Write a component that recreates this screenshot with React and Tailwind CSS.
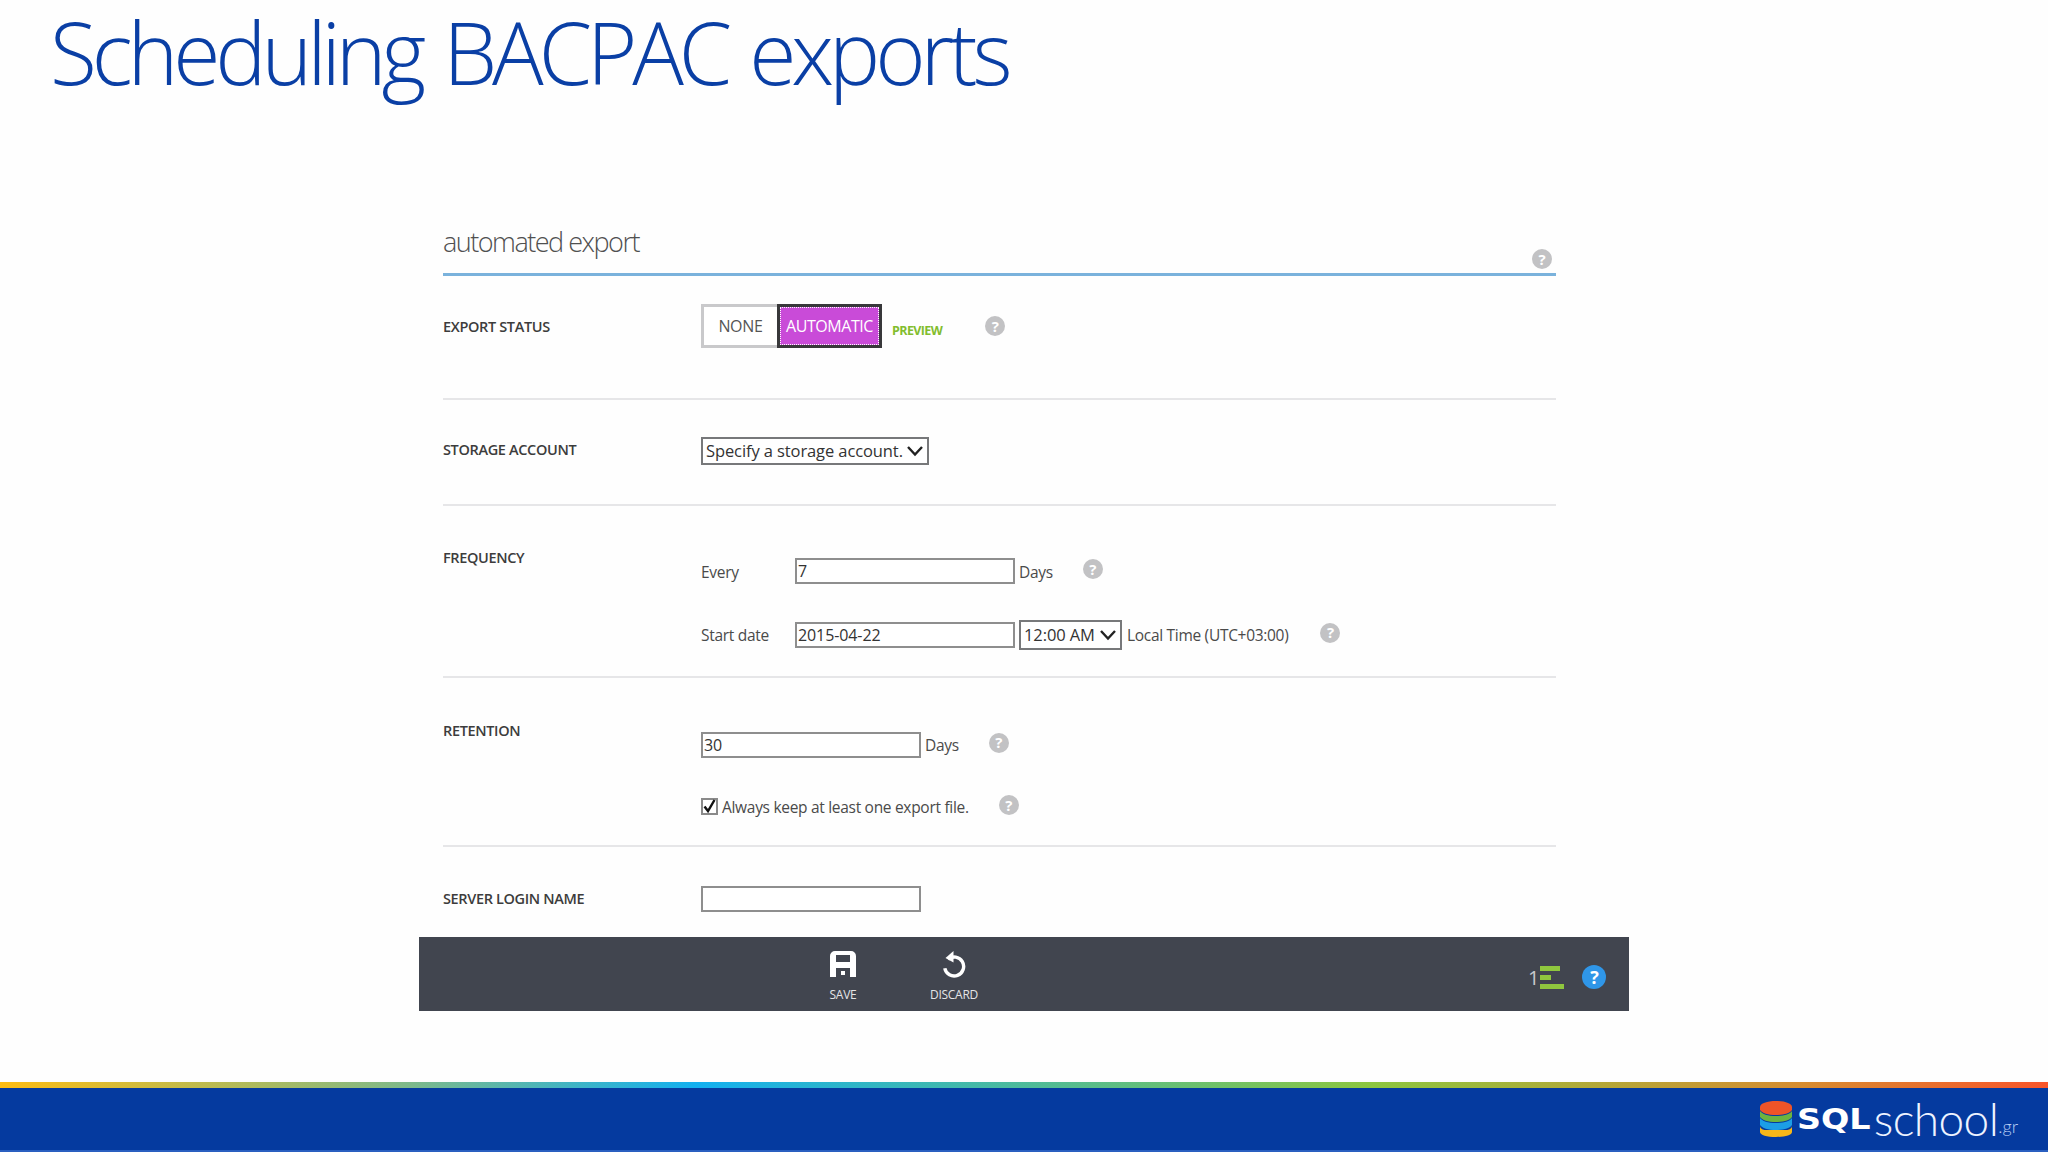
const SANS = { fontFamily: '"Open Sans", "Noto Sans", sans-serif' };

function Help({ className = "" }) {
  return (
    <span className={`flex h-[20px] w-[20px] items-center justify-center rounded-full bg-[#c2c2c4] text-[15px] font-bold leading-none text-white ${className}`}>?</span>
  );
}

function Chevron() {
  return (
    <svg width="18" height="12" viewBox="0 0 18 12" fill="none" stroke="#222" strokeWidth="2.4">
      <path d="M2 2l7 7.5L16 2" />
    </svg>
  );
}

function Label({ children, className = "" }) {
  return <div className={`w-[258px] shrink-0 text-[14.5px] font-semibold tracking-[-0.35px] text-[#3c3c3c] ${className}`}>{children}</div>;
}

function Field({ value, className = "" }) {
  return (
    <div className={`flex h-[26px] items-center border-2 border-[#8e8e8e] bg-white pl-[1px] text-[16px] leading-none tracking-[-0.1px] text-[#333] ${className}`}>{value}</div>
  );
}

function Select({ value, className = "" }) {
  return (
    <div className={`flex items-center justify-between border-2 border-[#77787a] bg-white pl-[3px] pr-[3px] text-[16.5px] leading-none tracking-[-0.1px] text-[#333] ${className}`}>
      <span>{value}</span>
      <Chevron />
    </div>
  );
}

function Muted({ children, className = "" }) {
  return <span className={`text-[15.5px] leading-none tracking-[-0.3px] text-[#4a4a4a] ${className}`}>{children}</span>;
}

function SaveIcon() {
  return (
    <svg width="26" height="26" viewBox="0 0 26 26">
      <path fill="#fff" fillRule="evenodd" d="M5 0h16a5 5 0 0 1 5 5v21H20V17H6v9H0V5a5 5 0 0 1 5-5zM6 4v7h14V4H6z" />
      <rect x="11" y="20" width="4" height="4" fill="#fff" />
    </svg>
  );
}

function DiscardIcon() {
  return (
    <svg width="24" height="28" viewBox="0 0 24 28" fill="none">
      <path d="M6 8.200a9.500 9.500 0 1 1-3.200 9" stroke="#fff" strokeWidth="3.400" />
      <path d="M11.500 0v11.500L3.500 7z" fill="#fff" />
    </svg>
  );
}

function Logo() {
  return (
    <div className="flex items-center">
      <svg width="32" height="36" viewBox="0 0 32 36" className="mr-[5px]">
        <path fill="#f7b718" d="M0 25c0 3 4 4 5 4h22c1 0 5-1 5-4v6c0 3-7 5-16 5S0 34 0 31z" />
        <path fill="#1c9ee6" d="M0 17c2 3 8 5 16 5s14-2 16-5v7c-2 3-8 5-16 5S2 27 0 24z" />
        <path fill="#6cb33f" d="M0 10c2 3 8 5 16 5s14-2 16-5v6c-2 3-8 5-16 5S2 19 0 16z" />
        <path fill="#ef5428" d="M0 6c0-3.500 7-6 16-6s16 2.500 16 6v3c-2 3-8 5-16 5S2 12 0 9z" />
      </svg>
      <span className="w-[72px] origin-left text-[29px] font-black leading-none text-white [transform:scaleX(1.15)]" style={{ fontFamily: '"DejaVu Sans", sans-serif' }}>SQL</span>
      <span className="ml-[5px] text-[46px] font-light leading-none tracking-[-0.6px] text-[#eef3ff]" style={{ fontFamily: 'Lato, sans-serif' }}>school</span>
      <span className="mt-[14px] text-[18px] font-light leading-none text-[#b9cdf5]" style={{ fontFamily: 'Lato, sans-serif' }}>.gr</span>
    </div>
  );
}

export default function App() {
  return (
    <div className="flex h-[1152px] w-[2048px] flex-col overflow-hidden bg-[#fefefe]" style={SANS}>
      <h1 className="mb-[5px] ml-[50px] text-[86px] font-light leading-[104px] tracking-[-5.1px] text-[#0a3fa5] [word-spacing:5px]">Scheduling BACPAC exports</h1>

      <div className="ml-[443px] mt-[112px] w-[1113px]">
        <div className="flex h-[55px] items-end justify-between border-b-[3px] border-[#7ab2dc]">
          <span className="mb-[18px] text-[27px] font-light leading-none tracking-[-1.5px] text-[#505050]">automated export</span>
          <Help className="mb-[4px] mr-[4px]" />
        </div>

        <div className="flex h-[124px] items-start border-b-2 border-[#e6e6e8] pt-[28px]">
          <Label className="mt-[12px]">EXPORT STATUS</Label>
          <div className="flex h-[44px] w-[181px] border-[3px] border-[#c9c9cb]">
            <div className="flex w-[73px] items-center justify-center bg-white text-[16px] tracking-[-0.3px] text-[#555]">NONE</div>
            <div className="-my-[3px] -mr-[3px] flex w-[105px] items-center justify-center border-[3px] border-[#38383a] bg-[#c94bd8] text-[16px] tracking-[-0.45px] text-white outline-1 -outline-offset-4 outline-dotted outline-white">AUTOMATIC</div>
          </div>
          <span className="ml-[10px] mt-[18px] text-[12.5px] font-bold tracking-[-0.6px] text-[#82bd2e]">PREVIEW</span>
          <Help className="ml-[43px] mt-[12px]" />
        </div>

        <div className="flex h-[106px] items-start border-b-2 border-[#e6e6e8] pt-[37px]">
          <Label className="mt-[2px]">STORAGE ACCOUNT</Label>
          <Select value="Specify a storage account." className="h-[28px] w-[228px]" />
        </div>

        <div className="flex h-[172px] items-start border-b-2 border-[#e6e6e8] pt-[41px]">
          <Label>FREQUENCY</Label>
          <div className="mt-[11px] flex flex-col gap-[36px]">
            <div className="flex items-center">
              <Muted className="w-[94px] pt-[3px]">Every</Muted>
              <Field value="7" className="w-[220px]" />
              <Muted className="ml-[4px] pt-[3px]">Days</Muted>
              <Help className="ml-[30px] -mt-[4px]" />
            </div>
            <div className="flex items-center">
              <Muted className="w-[94px] pt-[1px]">Start date</Muted>
              <Field value="2015-04-22" className="w-[220px]" />
              <Select value="12:00 AM" className="ml-[4px] h-[30px] w-[103px]" />
              <Muted className="ml-[5px] pt-[1px]">Local Time (UTC+03:00)</Muted>
              <Help className="ml-[32px] -mt-[5px]" />
            </div>
          </div>
        </div>

        <div className="flex h-[169px] items-start border-b-2 border-[#e6e6e8] pt-[42px]">
          <Label>RETENTION</Label>
          <div className="mt-[12px] flex flex-col gap-[40px]">
            <div className="flex items-center">
              <Field value="30" className="w-[220px]" />
              <Muted className="ml-[4px] pt-[1px]">Days</Muted>
              <Help className="ml-[30px] -mt-[5px]" />
            </div>
            <div className="flex items-center">
              <span className="flex h-[17px] w-[17px] items-center justify-center border-2 border-[#8a8a8a] bg-white">
                <svg width="15" height="15" viewBox="0 0 15 15" fill="none" stroke="#111" strokeWidth="2.400" className="shrink-0"><path d="M2.500 7.500l3.500 4.500 6.500-11" /></svg>
              </span>
              <Muted className="ml-[4px] pt-[2px]">Always keep at least one export file.</Muted>
              <Help className="ml-[30px] -mt-[3px]" />
            </div>
          </div>
        </div>

        <div className="flex h-[90px] items-start pt-[39px]">
          <Label className="mt-[2px]">SERVER LOGIN NAME</Label>
          <Field value="" className="w-[220px]" />
        </div>
      </div>

      <div className="ml-[419px] flex h-[74px] w-[1210px] items-start bg-[#41454f] pt-[14px]">
        <div className="ml-[394px] flex w-[60px] flex-col items-center">
          <SaveIcon />
          <span className="mt-[12px] text-[12px] leading-none tracking-[-0.2px] text-[#e4e4e6]">SAVE</span>
        </div>
        <div className="ml-[51px] flex w-[60px] flex-col items-center">
          <DiscardIcon />
          <span className="mt-[10px] text-[12px] leading-none tracking-[-0.3px] text-[#e4e4e6]">DISCARD</span>
        </div>
        <div className="ml-[544px] mt-[15px] flex items-center">
          <span className="text-[20px] leading-none text-[#c8c8cc]">1</span>
          <div className="ml-[1px] flex flex-col gap-[4px]">
            <span className="h-[5px] w-[20px] bg-[#8fc73e]" />
            <span className="h-[5px] w-[11px] bg-[#8fc73e]" />
            <span className="h-[5px] w-[24px] bg-[#8fc73e]" />
          </div>
        </div>
        <span className="ml-[18px] mt-[14px] flex h-[24px] w-[24px] items-center justify-center rounded-full bg-[#2f96e8] text-[18px] font-bold leading-none text-white">?</span>
      </div>

      <div className="mt-auto h-[6px] bg-[linear-gradient(90deg,#fdbc12_0%,#7db98a_20%,#12b0f0_34%,#8cc63f_67%,#d68c30_88%,#f8552a_100%)]" />
      <div className="flex h-[62px] items-center justify-end bg-[#053a9f] pr-[30px]">
        <Logo />
      </div>
      <div className="h-[2px] bg-[#2a5fc0]" />
    </div>
  );
}
